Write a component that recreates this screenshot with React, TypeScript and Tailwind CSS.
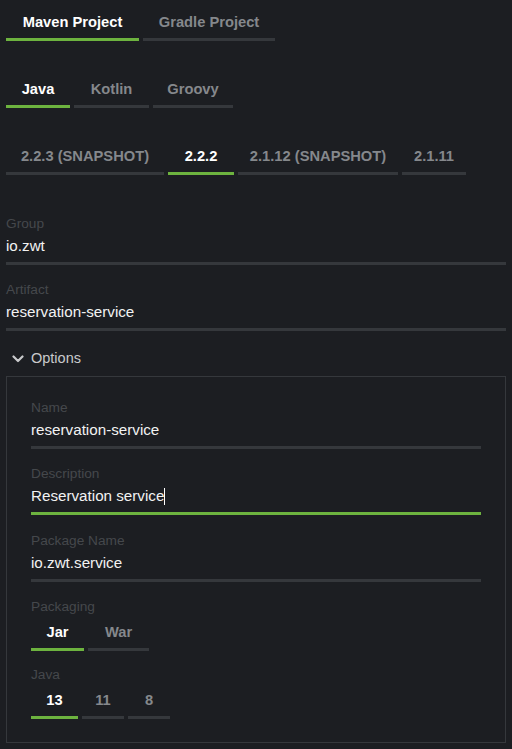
type Tab = { label: string; width: string; active?: boolean }

const projectTabs: Tab[] = [
  { label: 'Maven Project', width: 'w-[133px]', active: true },
  { label: 'Gradle Project', width: 'w-[132px]' },
]

const languageTabs: Tab[] = [
  { label: 'Java', width: 'w-[64px]', active: true },
  { label: 'Kotlin', width: 'w-[75px]' },
  { label: 'Groovy', width: 'w-[80px]' },
]

const bootTabs: Tab[] = [
  { label: '2.2.3 (SNAPSHOT)', width: 'w-[158px]' },
  { label: '2.2.2', width: 'w-[66px]', active: true },
  { label: '2.1.12 (SNAPSHOT)', width: 'w-[160px]' },
  { label: '2.1.11', width: 'w-[64px]' },
]

const packagingTabs: Tab[] = [
  { label: 'Jar', width: 'w-[53px]', active: true },
  { label: 'War', width: 'w-[61px]' },
]

const javaTabs: Tab[] = [
  { label: '13', width: 'w-[47px]', active: true },
  { label: '11', width: 'w-[42px]' },
  { label: '8', width: 'w-[42px]' },
]

function TabRow({ tabs, className = '' }: { tabs: Tab[]; className?: string }) {
  return (
    <div className={`flex gap-1 ${className}`}>
      {tabs.map((tab) => (
        <button
          key={tab.label}
          className={`${tab.width} pt-[12px] pb-[6px] border-b-[3px] text-center text-[14.7px] leading-5 font-bold whitespace-nowrap ${
            tab.active
              ? 'border-[#6db33f] text-white'
              : 'border-[#35383c] text-[#85888c]'
          }`}
        >
          {tab.label}
        </button>
      ))}
    </div>
  )
}

function InnerTabs({ label, tabs, className = '' }: { label: string; tabs: Tab[]; className?: string }) {
  return (
    <div className={className}>
      <div className="text-[13.7px] leading-5 text-[#45484c]">{label}</div>
      <div className="flex gap-1">
        {tabs.map((tab) => (
          <button
            key={tab.label}
            className={`${tab.width} pt-[5px] pb-[6px] border-b-[3px] text-center text-[14.7px] leading-5 font-bold ${
              tab.active
                ? 'border-[#6db33f] text-white'
                : 'border-[#35383c] text-[#85888c]'
            }`}
          >
            {tab.label}
          </button>
        ))}
      </div>
    </div>
  )
}

function Field({
  label,
  value,
  focused,
  className = '',
}: {
  label: string
  value: string
  focused?: boolean
  className?: string
}) {
  return (
    <div className={className}>
      <div className="text-[13.7px] leading-5 text-[#45484c]">{label}</div>
      <div
        className={`mt-[2px] pb-[6px] border-b-[3px] text-[15.2px] leading-5 text-[#f2f2f2] ${
          focused ? 'border-[#6db33f]' : 'border-[#35383c]'
        }`}
      >
        <span>{value}</span>
        {focused && <span className="inline-block w-px h-[17px] bg-white align-[-4px]" />}
      </div>
    </div>
  )
}

export default function App() {
  return (
    <div
      className="min-h-[749px] bg-[#1c1e22] px-[6px]"
      style={{ fontFamily: '"Liberation Sans", Arial, sans-serif' }}
    >
      {/* Project / language / boot version */}
      <TabRow tabs={projectTabs} />
      <TabRow tabs={languageTabs} className="mt-[26px]" />
      <TabRow tabs={bootTabs} className="mt-[26px]" />

      {/* Metadata */}
      <Field label="Group" value="io.zwt" className="mt-[39px]" />
      <Field label="Artifact" value="reservation-service" className="mt-[15px]" />

      <div className="mt-[17px] flex items-center gap-[7px] pl-[6px] text-[14.5px] leading-5 text-[#c9cacc]">
        <svg width="12" height="8" viewBox="0 0 12 8" fill="none" className="mt-[1px]">
          <polyline
            points="1.5,1.5 6,6 10.5,1.5"
            stroke="currentColor"
            strokeWidth="2.2"
            strokeLinecap="round"
            strokeLinejoin="round"
          />
        </svg>
        <span>Options</span>
      </div>

      <div className="mt-[8px] border border-[#35383c] px-[24px] pt-[21px] pb-[23px]">
        <Field label="Name" value="reservation-service" />
        <Field label="Description" value="Reservation service" focused className="mt-[15px]" />
        <Field label="Package Name" value="io.zwt.service" className="mt-[16px]" />
        <InnerTabs label="Packaging" tabs={packagingTabs} className="mt-[15px]" />
        <InnerTabs label="Java" tabs={javaTabs} className="mt-[14px]" />
      </div>
    </div>
  )
}
